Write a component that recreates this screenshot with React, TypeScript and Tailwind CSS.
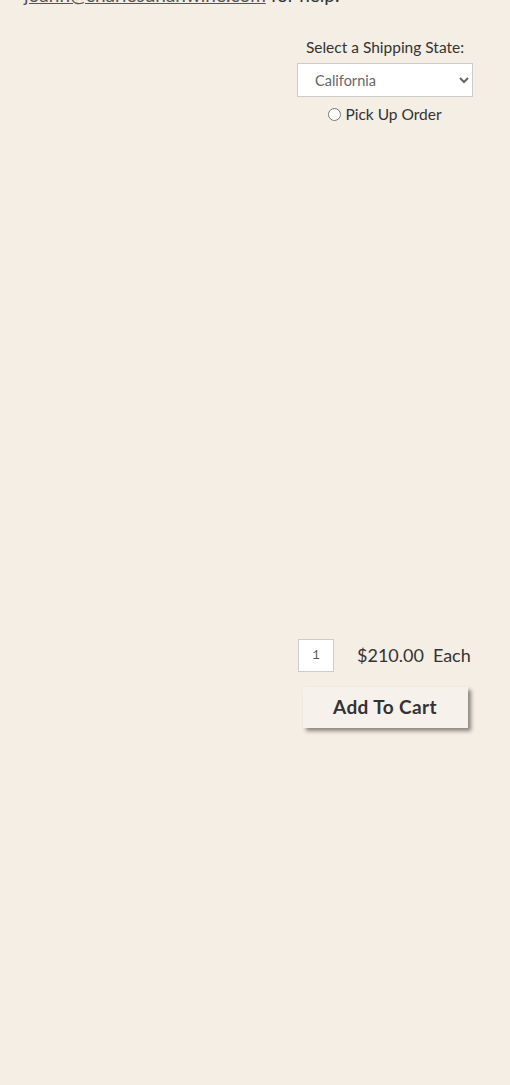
import React from "react";

const FONT = "font-['Lato','Open_Sans',sans-serif]";

export default function App() {
  return (
    <div className={`min-h-[1085px] w-[510px] overflow-hidden bg-[#f5eee5] text-[#333] ${FONT}`}>
      {/* help line, cut off by the top of the window */}
      <p className="-mt-[16px] px-6 text-[19px] leading-[22px] text-[#333]">
        <a href="#" className="text-[#555] underline">joann@charlesdhanwine.com</a> for help.
      </p>

      <div className="flex">
        <div className="flex-1" />
        <div className="mr-[37px] flex w-[176px] flex-col items-center">
          <label className="mt-[31px] text-[15.5px] leading-[20px] text-[#333]">Select a Shipping State:</label>
          <select
            defaultValue="California"
            className="mt-[6px] h-[34px] w-[176px] border border-[#ccc] bg-white pl-[13px] text-[14.5px] text-[#666]"
          >
            <option>California</option>
            <option>Oregon</option>
            <option>Nevada</option>
          </select>
          <label className="mt-[7px] flex items-center gap-[4px] text-[15.5px] leading-[20px]">
            <input type="radio" name="pickup" className="h-[13px] w-[13px]" />
            Pick Up Order
          </label>

          <div className="h-[515px]" />

          <div className="flex w-full items-center">
            <input
              type="text"
              defaultValue="1"
              className="ml-[1px] h-[33px] w-[36px] border border-[#ccc] bg-white text-center font-['Liberation_Mono',monospace] text-[12px] text-[#555]"
            />
            <span className="ml-[23px] text-[18px] text-[#333]">$210.00</span>
            <span className="ml-[9px] text-[18px] text-[#333]">Each</span>
          </div>
          <button className="mt-[15px] h-[41px] w-[165px] bg-[#f6f1eb] text-[19px] font-bold tracking-[0.4px] text-[#333] shadow-[3px_3px_4px_rgba(0,0,0,0.45)]">
            Add To Cart
          </button>
        </div>
      </div>
    </div>
  );
}
